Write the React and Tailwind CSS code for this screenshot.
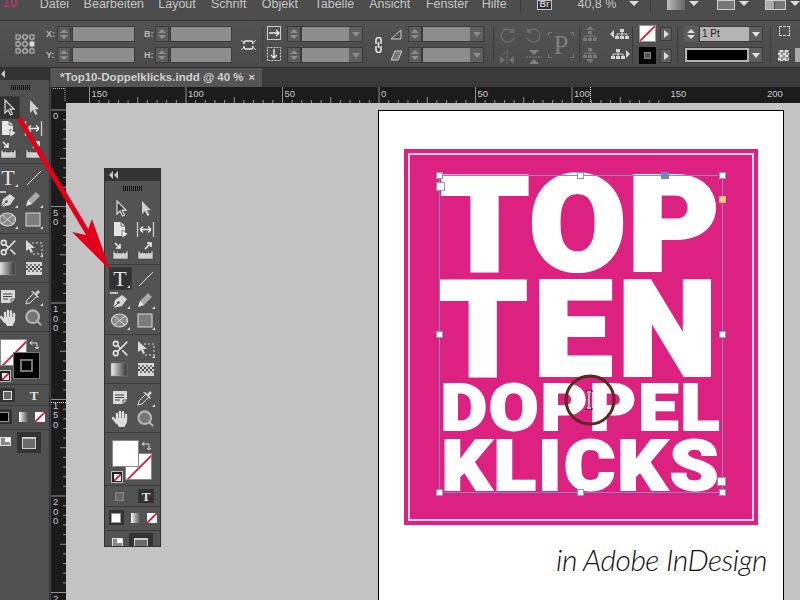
import React from 'react';
import { Scissors, Search } from 'lucide-react';

const MENU = [
  ['Datei', 'w-[44px]'],
  ['Bearbeiten', 'w-[75px]'],
  ['Layout', 'w-[53px]'],
  ['Schrift', 'w-[51px]'],
  ['Objekt', 'w-[53px]'],
  ['Tabelle', 'w-[55px]'],
  ['Ansicht', 'w-[57px]'],
  ['Fenster', 'w-[56px]'],
  ['Hilfe', 'w-[38px]'],
];

const Ico = ({ w = 21, h = 21, children, className = '' }) => (
  <svg width={w} height={h} viewBox={`0 0 ${w} ${h}`} className={`block shrink-0 ${className}`} fill="none">
    {children}
  </svg>
);

const Corner = () => <path d="M20 20h-3l3-3z" fill="#ddd" />;

const SelectIcon = () => (
  <Ico><path d="M7 3v13l3-3 2.5 5 2-1-2.4-4.8H16z" fill="#3c3c3c" stroke="#ddd" strokeWidth="1.2" /></Ico>
);
const DirectIcon = () => (
  <Ico><path d="M7 3v13l3-3 2.5 5 2-1-2.4-4.8H16z" fill="#cfcfcf" /></Ico>
);
const PageIcon = () => (
  <Ico>
    <path d="M4 3h7l4 4v10H4z" fill="#e4e4e4" />
    <path d="M11 3v4h4" stroke="#666" />
    <path d="M12 11v8l6-4z" fill="#eee" stroke="#444" strokeWidth=".6" />
  </Ico>
);
const GapIcon = () => (
  <Ico>
    <path d="M2.5 3v15M18.5 3v15" stroke="#ccc" strokeWidth="1.3" />
    <path d="M5 10.5h11M5 10.5l3-3M5 10.5l3 3M16 10.5l-3-3M16 10.5l-3 3" stroke="#eee" strokeWidth="1.3" />
  </Ico>
);
const Tray = () => (
  <path d="M3 11h2v2h2v-2h1v2h5v-2h1v2h2v-2h2v8H3z" fill="#d2d2d2" stroke="#333" strokeWidth=".5" />
);
const CollectIcon = () => (
  <Ico>
    <Tray />
    <path d="M5 3l5 5M10 4v4H6" stroke="#eee" strokeWidth="1.6" />
  </Ico>
);
const PlaceIcon = () => (
  <Ico>
    <Tray />
    <path d="M10 9l6-6M12 3h4v4" stroke="#eee" strokeWidth="1.6" />
  </Ico>
);
const TypeIcon = () => (
  <span className="relative flex h-[21px] w-[21px] items-center justify-center text-[22px] leading-none text-[#e4e4e4] [font-family:'Liberation_Serif',serif]">
    T
    <svg width="21" height="21" className="absolute left-0 top-0"><Corner /></svg>
  </span>
);
const LineIcon = () => (
  <Ico><path d="M4 18L18 4" stroke="#ddd" strokeWidth="1" /></Ico>
);
const PenIcon = () => (
  <Ico>
    <path d="M0 4h8" stroke="#ddd" strokeWidth="1.6" />
    <path d="M3 19l2-8 7-5 5 4-5 7z" fill="#d6d6d6" />
    <path d="M3 19l5-5" stroke="#444" />
    <circle cx="8.5" cy="13.5" r="1.2" fill="#444" />
    <Corner />
  </Ico>
);
const PencilIcon = () => (
  <Ico>
    <path d="M3 18l2-6 8-8 4 4-8 8z" fill="#a9a9a9" />
    <path d="M3 18l2-6 4 4z" fill="#e2e2e2" />
    <Corner />
  </Ico>
);
const EllipseIcon = () => (
  <Ico>
    <ellipse cx="9.5" cy="10.5" rx="8" ry="6.5" fill="#8a8a8a" stroke="#d8d8d8" strokeWidth="1.2" />
    <path d="M4 6l11 9M15 6L4 15" stroke="#d8d8d8" />
    <Corner />
  </Ico>
);
const RectIcon = () => (
  <Ico>
    <rect x="3" y="4" width="14" height="13" fill="#7c7c7c" stroke="#cfcfcf" strokeWidth="1.1" />
    <Corner />
  </Ico>
);
const FreeIcon = () => (
  <Ico>
    <path d="M9 6h10v11H9" stroke="#ddd" strokeDasharray="2 2" />
    <path d="M3 3v11l3-2 2 4 2-1-2-4h4z" fill="#d8d8d8" />
    <Corner />
  </Ico>
);
const GradientIcon = () => (
  <Ico>
    <defs>
      <linearGradient id="gr1"><stop stopColor="#eee" /><stop offset="1" stopColor="#333" /></linearGradient>
    </defs>
    <rect x="1" y="4" width="16" height="13" fill="url(#gr1)" stroke="#888" strokeWidth=".5" />
  </Ico>
);
const FeatherIcon = () => (
  <Ico>
    <rect x="3" y="4" width="16" height="13" fill="#d6d6d6" />
    {[0, 1, 2, 3, 4, 5, 6, 7].map((i) => (
      <rect key={i} x={3 + i * 2} y={i % 2 ? 8 : 10} width="2" height="2" fill="#444" />
    ))}
    {[0, 1, 2, 3, 4, 5, 6, 7].map((i) => (
      <rect key={i} x={3 + i * 2} y={i % 2 ? 12 : 6} width="2" height="2" fill="#777" />
    ))}
  </Ico>
);
const NoteIcon = () => (
  <Ico>
    <path d="M3 4h14v9l-4 4H3z" fill="#d8d8d8" />
    <path d="M5 8h9M5 10.5h9M5 13h5" stroke="#444" />
    <path d="M13 17v-4h4" stroke="#555" />
  </Ico>
);
const DropperIcon = () => (
  <Ico>
    <path d="M3 18l1-4 7-7 3 3-7 7z" fill="#555" stroke="#ddd" />
    <path d="M10 5l2 2 3-3 2 2-3 3 2 2-1 1-7-7z" fill="#ccc" />
    <Corner />
  </Ico>
);
const HandIcon = () => (
  <Ico>
    <g stroke="#dcdcdc" strokeWidth="2.4" strokeLinecap="round">
      <path d="M7 6v6M10 4v7M13 4.500v7M16 7v6M3 10l3.500 4.500" />
    </g>
    <path d="M6 10h11v4l-2.500 5H9l-3-5z" fill="#dcdcdc" />
  </Ico>
);
const ZoomIcon = () => (
  <span className="flex h-[21px] w-[21px] items-center justify-center">
    <Search size={19} fill="#777" stroke="#b5b5b5" strokeWidth={2.6} />
  </span>
);
const ScissorIcon = () => (
  <span className="flex h-[21px] w-[21px] items-center justify-center">
    <Scissors size={19} stroke="#e2e2e2" strokeWidth={2} />
  </span>
);

const Slash = ({ s }) => <path d={`M0 ${s}L${s} 0`} stroke="#d7182a" strokeWidth="1.7" />;

const ToolRow = ({ left, right, activeLeft }) => (
  <div className="flex h-[21px] justify-center gap-1">
    <div className={`h-[21px] w-[21px] ${activeLeft ? 'bg-[#323232] outline-1 outline-[#3c3c3c]' : ''}`}>{left}</div>
    <div className="h-[21px] w-[21px]">{right}</div>
  </div>
);

const Sep = ({ className = 'my-[3px]' }) => <div className={`h-px shrink-0 bg-[#3c3c3c] ${className}`} />;

const HeadArrow = () => <div className="h-0 w-0 border-y-[4px] border-r-[4px] border-y-transparent border-r-[#c8c8c8]" />;

// same toolbox twice: docked on the left edge and floating on the pasteboard
const ToolPanel = ({ floating }) => (
  <div className={`flex w-[57px] shrink-0 flex-col ${floating ? 'h-[379px] overflow-hidden border-x border-b border-[#333] bg-[#535353]' : 'h-full bg-[#505050]'}`}>
    <div className={`flex shrink-0 items-center gap-px bg-[#343434] ${floating ? 'h-[13px] pl-[4px]' : 'h-[12px] pl-[9px]'}`}>
      <HeadArrow />
      {floating && <HeadArrow />}
    </div>
    <div className="mx-auto mb-[7px] mt-[5px] h-[5px] w-[20px] shrink-0 bg-[repeating-linear-gradient(90deg,#111_0,#111_1px,transparent_1px,transparent_2px)]" />
    <ToolRow left={<SelectIcon />} right={<DirectIcon />} activeLeft={!floating} />
    <ToolRow left={<PageIcon />} right={<GapIcon />} />
    <ToolRow left={<CollectIcon />} right={<PlaceIcon />} />
    <Sep />
    <ToolRow left={<TypeIcon />} right={<LineIcon />} activeLeft={floating} />
    <ToolRow left={<PenIcon />} right={<PencilIcon />} />
    <ToolRow left={<EllipseIcon />} right={<RectIcon />} />
    <Sep />
    <ToolRow left={<ScissorIcon />} right={<FreeIcon />} />
    <ToolRow left={<GradientIcon />} right={<FeatherIcon />} />
    <Sep />
    <ToolRow left={<NoteIcon />} right={<DropperIcon />} />
    <ToolRow left={<HandIcon />} right={<ZoomIcon />} />
    <Sep />
    <ColorBlock floating={floating} />
    <Sep />
    <div className="flex h-[14px] shrink-0 items-center justify-center gap-[11px]">
      <div className={`flex h-[14px] w-[16px] items-center justify-center ${floating ? '' : 'bg-[#333]'}`}>
        <div className={`h-[9px] w-[9px] border ${floating ? 'border-[#888] bg-[#666]' : 'border-[#ddd] bg-[#666]'}`} />
      </div>
      <div className={`flex h-[14px] w-[16px] items-center justify-center text-[13px] font-bold leading-none text-[#e4e4e4] [font-family:'Liberation_Serif',serif] ${floating ? 'bg-[#333]' : ''}`}>T</div>
    </div>
    <Sep />
    <div className="flex h-[15px] shrink-0 items-center justify-center gap-[7px]">
      <div className="flex h-[15px] w-[15px] items-center justify-center bg-[#333]">
        <div className={`h-[10px] w-[10px] border border-[#999] ${floating ? 'bg-white' : 'bg-black'}`} />
      </div>
      <div className="h-[10px] w-[9px] bg-linear-to-r from-white to-[#555]" />
      <Ico w={10} h={10}><rect width="10" height="10" fill="#fff" /><Slash s={10} /></Ico>
    </div>
    <Sep className="mb-[2px] mt-[5px]" />
    <div className="flex shrink-0 items-start justify-center gap-[6px]">
      <div className="mt-[5px] flex h-[9px] w-[11px] items-start justify-end border border-[#ddd] bg-[#888]">
        <div className="h-[4px] w-[5px] bg-white" />
      </div>
      <div className="flex h-[21px] w-[24px] items-center justify-center bg-[#333]">
        <div className="h-[12px] w-[14px] border border-t-2 border-[#ccc] bg-[#6a6a6a]" />
      </div>
    </div>
  </div>
);

const ColorBlock = ({ floating }) => {
  const fillBox = floating ? (
    <div className="h-[27px] w-[27px] border border-[#888] bg-white" />
  ) : (
    <svg width="27" height="27" className="block border border-[#888] bg-white"><Slash s={27} /></svg>
  );
  const strokeBox = floating ? (
    <svg width="27" height="27" className="block border border-[#888] bg-white"><Slash s={27} /></svg>
  ) : (
    <div className="flex h-[27px] w-[27px] items-center justify-center border border-[#777] bg-black">
      <div className="h-[13px] w-[13px] border-2 border-[#777]" />
    </div>
  );
  return (
    <div className={`flex h-[46px] shrink-0 flex-col pt-[4px] ${floating ? 'pl-[7px]' : 'pl-[8px]'}`}>
      <div className="flex">
        <div className={floating ? 'relative z-10' : ''}>{fillBox}</div>
        <Ico w={14} h={14} className="ml-[1px]">
          <path d="M2 4h7v6M2 4l2.500-2M2 4l2.500 2M9 10l-2-2M9 10l2-2" stroke="#ddd" strokeWidth="1" />
        </Ico>
      </div>
      <div className="flex items-end">
        <div className="relative z-20 -mb-[3px] -ml-px flex h-[12px] w-[12px] shrink-0 items-center justify-center border border-[#bbb] bg-[#222]">
          <Ico w={7} h={7}><rect width="7" height="7" fill="#eee" /><Slash s={7} /></Ico>
        </div>
        <div className={`ml-[2px] -mt-[14px] ${floating ? '' : 'relative z-10'}`}>{strokeBox}</div>
      </div>
    </div>
  );
};

const Spinner = () => (
  <div className="flex h-full w-[14px] shrink-0 flex-col items-center justify-center gap-[2px] border border-[#3b3b3b] bg-[#5c5c5c]">
    <div className="h-0 w-0 border-x-[4px] border-b-[4px] border-x-transparent border-b-[#8d8d8d]" />
    <div className="h-0 w-0 border-x-[4px] border-t-[4px] border-x-transparent border-t-[#8d8d8d]" />
  </div>
);

const NumField = ({ label, wide }) => (
  <div className="flex h-[16px] items-center">
    <span className="w-[11px] text-[9px] font-bold leading-none text-[#b8b8b8]">{label}</span>
    <Spinner />
    <div className={`ml-px h-full border border-[#3b3b3b] bg-[#8d8d8d] ${wide ? 'w-[63px]' : 'w-[62px]'}`} />
  </div>
);

const DropField = () => (
  <div className="flex h-[16px]">
    <Spinner />
    <div className="flex h-full w-[62px] border border-[#3b3b3b] bg-[#8d8d8d]">
      <div className="flex-1" />
      <div className="flex w-[13px] items-center justify-center bg-[#5f5f5f]">
        <div className="h-0 w-0 border-x-[4px] border-t-[5px] border-x-transparent border-t-[#8d8d8d]" />
      </div>
    </div>
  </div>
);

const VSep = ({ className }) => <div className={`h-[37px] w-px shrink-0 self-center bg-[#3a3a3a] ${className}`} />;

const Stack = ({ className = '', children }) => (
  <div className={`flex shrink-0 flex-col gap-[5px] ${className}`}>{children}</div>
);

const Proxy = () => (
  <Ico w={20} h={20}>
    <path d="M3 3H17V17H3ZM3 10H17M10 3V17" stroke="#b8b8b8" strokeWidth=".8" />
    {[1, 8, 15].map((x) => [1, 8, 15].map((y) => (
      <rect key={`${x}-${y}`} x={x} y={y} width="4" height="4" fill={x === 15 && y === 8 ? '#ddd' : '#505050'} stroke="#ddd" strokeWidth=".8" />
    )))}
  </Ico>
);

const BrokenChain = () => (
  <Ico w={15} h={16}>
    <path d="M5 4h5a2 2 0 0 1 2 2v1M5 12h5a2 2 0 0 0 2-2V9M5 4a2 2 0 0 0-2 2v1M5 12a2 2 0 0 1-2-2V9" stroke="#e4e4e4" strokeWidth="1.6" />
    <path d="M0 3l2 2M15 3l-2 2M0 13l2-2M15 13l-2-2" stroke="#ccc" />
  </Ico>
);
const Chain = () => (
  <Ico w={9} h={16}>
    <path d="M2 7V3a2.400 2.400 0 0 1 5 0v4M2 9v4a2.400 2.400 0 0 0 5 0V9M4.500 5v6" stroke="#e4e4e4" strokeWidth="1.6" />
  </Ico>
);
const ScaleBox = ({ down }) => (
  <Ico w={15} h={15}>
    <rect x=".5" y=".5" width="13" height="13" stroke="#ccc" strokeDasharray={down ? '2 1' : undefined} />
    {down ? (
      <path d="M7 2v9M4 8l3 3 3-3" stroke="#eee" strokeWidth="1.4" />
    ) : (
      <path d="M2 7h10M9 4l3 3-3 3" stroke="#eee" strokeWidth="1.4" />
    )}
  </Ico>
);
const Rotate = ({ flip }) => (
  <Ico w={16} h={16} className={flip ? '-scale-x-100' : ''}>
    <path d="M14 5a6.500 6.500 0 1 0 1 5" stroke="#707070" strokeWidth="1.2" />
    <path d="M15 1v5h-5z" fill="#707070" />
  </Ico>
);
const FlipA = () => (
  <Ico w={16} h={16}>
    <path d="M1 7v8l5-4zM15 7v8l-5-4z" fill="#707070" />
    <path d="M3 6a6 6 0 0 1 10 0M8 1v15" stroke="#707070" strokeDasharray="2 1" />
  </Ico>
);
const FlipB = () => (
  <Ico w={16} h={16}>
    <path d="M3 1h10L8 6zM3 15h10L8 10z" fill="#828282" />
    <path d="M0 8h16" stroke="#828282" strokeDasharray="2 1" />
  </Ico>
);
const Tree = ({ c = '#7a7a7a' }) => (
  <>
    <rect x="5" y="0" width="4" height="3" fill={c} />
    <path d="M7 3v2M2 7V5h10v2M7 5v2" stroke={c} />
    <rect x="0" y="7" width="4" height="3" fill={c} />
    <rect x="5" y="7" width="4" height="3" fill={c} />
    <rect x="10" y="7" width="4" height="3" fill={c} />
  </>
);
const AlignIcon = ({ dir }) => {
  const c = dir === 'l' || dir === 'r' ? '#d4d4d4' : '#7a7a7a';
  return (
    <Ico w={20} h={17}>
      {dir === 't' && <path d="M7 0l4 4H3z" fill={c} />}
      {dir === 'b' && <path d="M3 13h8l-4 4z" fill={c} />}
      {dir === 'l' && <path d="M4 4v8L0 8z" fill={c} />}
      {dir === 'r' && <path d="M16 4v8l4-4z" fill={c} />}
      <g transform={dir === 'l' ? 'translate(5 3)' : dir === 'r' ? 'translate(1 3)' : dir === 't' ? 'translate(0 5)' : 'translate(0 2)'}>
        <Tree c={c} />
      </g>
    </Ico>
  );
};

const ArrowBtn = () => (
  <div className="flex h-[14px] w-[12px] items-center justify-center border border-[#3c3c3c] bg-[#5e5e5e]">
    <div className="h-0 w-0 border-y-[4px] border-l-[5px] border-y-transparent border-l-[#ddd]" />
  </div>
);

const DropBtn = () => (
  <div className="flex h-full w-[13px] shrink-0 items-center justify-center bg-[#5e5e5e]">
    <div className="h-0 w-0 border-x-[4px] border-t-[5px] border-x-transparent border-t-[#e2e2e2]" />
  </div>
);

const ControlBar = () => (
  <div className="flex h-[47px] shrink-0 items-start overflow-hidden border-b border-[#2d2d2d] bg-linear-to-b from-[#535353] to-[#4b4b4b] pt-[5px]">
    <div className="ml-[15px] mt-[8px] shrink-0"><Proxy /></div>
    <Stack className="ml-[11px]">
      <NumField label="X:" wide />
      <NumField label="Y:" wide />
    </Stack>
    <Stack className="ml-[9px]">
      <NumField label="B:" />
      <NumField label="H:" />
    </Stack>
    <div className="ml-[9px] mt-[11px] shrink-0"><BrokenChain /></div>
    <VSep className="ml-[6px] -mt-[5px]" />
    <Stack className="ml-[4px]">
      <div className="flex h-[16px] gap-[5px]"><ScaleBox /><DropField /></div>
      <div className="flex h-[16px] gap-[5px]"><ScaleBox down /><DropField /></div>
    </Stack>
    <div className="ml-[11px] mt-[11px] shrink-0"><Chain /></div>
    <Stack className="ml-[8px]">
      <div className="flex h-[16px] items-center gap-[6px]">
        <Ico w={11} h={11}><path d="M0 10L10 1v9z" stroke="#ccc" /></Ico>
        <DropField />
      </div>
      <div className="flex h-[16px] items-center gap-[6px]">
        <Ico w={11} h={11}><path d="M0 10L4 1h7L7 10z" stroke="#ccc" fill="#777" /></Ico>
        <DropField />
      </div>
    </Stack>
    <VSep className="ml-[9px] -mt-[5px]" />
    <div className="ml-[5px] grid shrink-0 grid-cols-[16px_16px] gap-x-[11px] gap-y-[6px] pt-px">
      <Rotate /><Rotate flip /><FlipA /><FlipB />
    </div>
    <div className="relative ml-[6px] mt-[6px] flex h-[26px] w-[26px] shrink-0 items-center justify-center text-[27px] leading-none text-[#7e7e7e] [font-family:'Liberation_Serif',serif]">
      P
      <svg width="26" height="26" className="absolute left-0 top-0" fill="none">
        <path d="M.5 4V.5H4M22 .5h3.500V4M.5 22v3.500H4M22 25.500h3.500V22" stroke="#777" />
      </svg>
    </div>
    <VSep className="ml-[5px] -mt-[5px]" />
    <div className="ml-[3px] grid shrink-0 grid-cols-[20px_20px] gap-x-[7px] gap-y-[3px]">
      <AlignIcon dir="t" /><AlignIcon dir="l" /><AlignIcon dir="b" /><AlignIcon dir="r" />
    </div>
    <VSep className="ml-[2px] -mt-[5px]" />
    <Stack className="ml-[6px] -mt-[1px] gap-[4px]">
      <div className="flex items-center gap-[4px]">
        <svg width="17" height="17" className="block border border-[#999] bg-white"><Slash s={15} /></svg>
        <ArrowBtn />
      </div>
      <div className="flex items-center gap-[4px]">
        <div className="flex h-[17px] w-[17px] items-center justify-center bg-black">
          <div className="h-[7px] w-[7px] border border-[#888] bg-[#555]" />
        </div>
        <ArrowBtn />
      </div>
    </Stack>
    <VSep className="ml-[5px] -mt-[5px]" />
    <Stack className="ml-[6px]">
      <div className="flex h-[16px]">
        <div className="flex h-full w-[14px] shrink-0 flex-col items-center justify-center gap-[2px] bg-[#5c5c5c]">
          <div className="h-0 w-0 border-x-[4px] border-b-[4px] border-x-transparent border-b-[#ddd]" />
          <div className="h-0 w-0 border-x-[4px] border-t-[4px] border-x-transparent border-t-[#ddd]" />
        </div>
        <div className="ml-px flex h-full w-[64px] border border-[#3b3b3b] bg-[#b4b4b4]">
          <span className="flex-1 pl-[2px] text-[10px] font-medium leading-[14px] text-[#222]">1 Pt</span>
          <DropBtn />
        </div>
      </div>
      <div className="flex h-[16px] w-[79px] border border-[#3b3b3b] bg-[#b4b4b4] pl-[2px]">
        <div className="my-[2px] mr-[2px] flex-1 bg-black" />
        <DropBtn />
      </div>
    </Stack>
    <VSep className="ml-[7px] -mt-[5px]" />
    <div className="ml-[7px] flex shrink-0 flex-col gap-[12px]">
      <div className="ml-[1px] h-[10px] w-[11px] border border-dashed border-[#ccc]" />
      <div className="flex items-center gap-[6px]">
        <div className="h-[11px] w-[11px] bg-[conic-gradient(#ddd_25%,#888_0_50%,#ddd_0_75%,#888_0)] bg-[length:5px_5px]" />
        <div className="h-[14px] w-[10px] bg-[#aaa]" />
      </div>
    </div>
  </div>
);

const TICKS = Array.from({ length: 60 }, (_, i) => i);
const STEP = 96.5;

const TopRuler = () => (
  <svg width="749" height="16" className="block shrink-0 bg-[#1c1c1c]">
    <path d="M2 1.500h12M14 1v13" stroke="#bbb" strokeDasharray="1 1" />
    {TICKS.map((i) => {
      const x = 328 - 3 * STEP + (i * STEP) / 10;
      if (x < 16) return null;
      const len = i % 10 === 0 ? 16 : i % 5 === 0 ? 6 : 3;
      return <line key={i} x1={x} x2={x} y1={16 - len} y2={16} stroke="#b0b0b0" strokeWidth=".8" />;
    })}
    {[150, 100, 50, 0, 50, 100, 150, 200].map((n, i) => (
      <text key={i} x={328 - 3 * STEP + i * STEP + 2} y="10" fontSize="9.500" fill="#c8c8c8" fontFamily="Liberation Sans">{n}</text>
    ))}
    <path d="M539.500 0v16" stroke="#fff" strokeDasharray="1 1" />
  </svg>
);

const LeftRuler = () => (
  <svg width="15" height="497" className="block shrink-0 bg-[#1c1c1c]">
    {TICKS.map((i) => {
      const y = 7 + (i * STEP) / 10;
      const len = i % 10 === 0 ? 15 : i % 5 === 0 ? 6 : 3;
      return <line key={i} x1={15 - len} x2={15} y1={y} y2={y} stroke="#b0b0b0" strokeWidth=".8" />;
    })}
    {['0', '50', '100', '150', '200', '250'].map((n, i) =>
      n.split('').map((d, j) => (
        <text key={`${i}-${j}`} x="2" y={7 + i * STEP + 9 + j * 9.5} fontSize="9.500" fill="#c8c8c8" fontFamily="Liberation Sans">{d}</text>
      ))
    )}
    <path d="M0 299.500h15" stroke="#fff" strokeDasharray="1 1" />
  </svg>
);

const Handle = ({ className }) => (
  <div className={`absolute h-[7px] w-[7px] border border-[#8f94d0] bg-white ${className}`} />
);

const SelectionFrame = () => (
  <div className="absolute left-[35px] top-[26px] h-[318px] w-[284px] border border-[#8f84cc]">
    <Handle className="-left-[4px] -top-[4px]" />
    <Handle className="left-[137px] -top-[4px]" />
    <div className="absolute left-[221px] -top-[4px] h-[7px] w-[8px] bg-[#6f86c4]" />
    <Handle className="-right-[4px] -top-[4px]" />
    <div className="absolute -left-[4px] top-[6px] h-[9px] w-[9px] border border-[#8f94d0] bg-white" />
    <div className="absolute -right-[4px] top-[20px] h-[7px] w-[7px] border border-[#b9b08c] bg-[#f3d27a]" />
    <Handle className="-left-[4px] top-[155px]" />
    <Handle className="-right-[4px] top-[155px]" />
    <div className="absolute -right-[4px] bottom-[6px] h-[9px] w-[9px] border border-[#8f94d0] bg-white" />
    <Handle className="-left-[4px] -bottom-[4px]" />
    <Handle className="left-[137px] -bottom-[4px]" />
    <Handle className="-right-[4px] -bottom-[4px]" />
  </div>
);

const Cursor = () => (
  <svg width="56" height="56" className="absolute left-[158px] top-[223px]">
    <circle cx="28" cy="28" r="24" stroke="#5c2a1c" strokeWidth="3" fill="none" />
    <path d="M24 19h7M24 37h7M27.500 19v18" stroke="#111" strokeWidth="1.2" />
    <path d="M25 20h4M25 36h4M27 20v16" stroke="#8fc4c4" strokeWidth="2" />
  </svg>
);

const BigLine = ({ className, children }) => (
  <div className={`whitespace-nowrap text-center font-black text-white [font-family:Roboto,sans-serif] ${className}`}>{children}</div>
);

const Poster = () => (
  <div className="relative h-[376px] w-[354px] bg-[#dc2180] p-[4px]">
    <div className="h-full border-2 border-[#f7d3e4] pt-[20px]">
      <BigLine className="h-[100px] scale-x-[1.06] text-[132px] leading-[100px] tracking-[2px] [-webkit-text-stroke:4px_white]">TOP</BigLine>
      <BigLine className="mt-[5px] h-[100px] scale-x-[1.06] text-[132px] leading-[100px] tracking-[6px] [-webkit-text-stroke:4px_white]">TEN</BigLine>
      <BigLine className="mt-[3px] h-[50px] scale-x-[1.1] text-[65px] leading-[50px] tracking-[2px] [-webkit-text-stroke:2px_white]">DOPPEL</BigLine>
      <BigLine className="mt-[6px] h-[54px] scale-x-[1.1] text-[71px] leading-[54px] tracking-[2px] [-webkit-text-stroke:2px_white]">KLICKS</BigLine>
    </div>
    <SelectionFrame />
    <Cursor />
  </div>
);

const Page = () => (
  <div className="h-[520px] w-[406px] shrink-0 border-x border-t border-black bg-white pl-[25px] pt-[38px]">
    <Poster />
    <p className="mr-[16px] mt-[16px] whitespace-nowrap text-right text-[30px] font-light italic leading-[36px] tracking-[-0.5px] text-[#111] [font-family:Lato,sans-serif]">in Adobe InDesign</p>
  </div>
);

export default function App() {
  return (
    <div className="relative flex h-[600px] w-[800px] flex-col overflow-hidden bg-[#4b4b4b] text-[#c6c6c6] [font-family:'Liberation_Sans',sans-serif]">
      <div className="flex h-[21px] shrink-0 border-b border-[#333] bg-[#4d4d4d]">
        <div className="h-[9px] w-[40px] pl-[2px] text-[14px] font-bold leading-[5px] text-[#a83a66]">10</div>
        {MENU.map(([name, w]) => (
          <div key={name} className={`h-[9px] text-[12.5px] leading-[9px] ${w}`}>{name}</div>
        ))}
        <div className="h-[13px] w-px bg-[#3a3a3a]" />
        <div className="ml-[16px] h-[10px] w-[16px] border border-[#c4c4c4] bg-[#333] text-center text-[9px] font-bold leading-[7px]">Br</div>
        <div className="ml-[25px] h-[9px] w-[44px] text-[12.5px] leading-[9px]">40,8 %</div>
        <div className="ml-[8px] mt-[1px] h-0 w-0 border-x-[5px] border-t-[5px] border-x-transparent border-t-[#ddd]" />
        <div className="ml-[11px] h-[13px] w-px bg-[#3a3a3a]" />
        <div className="ml-[16px] h-[10px] w-[18px] bg-linear-to-r from-[#bbb] to-[#666]" />
        <div className="ml-[4px] mt-[1px] h-0 w-0 border-x-[5px] border-t-[5px] border-x-transparent border-t-[#ddd]" />
        <div className="ml-[18px] h-[10px] w-[18px] border border-[#ccc] bg-[#777]" />
        <div className="ml-[4px] mt-[1px] h-0 w-0 border-x-[5px] border-t-[5px] border-x-transparent border-t-[#ddd]" />
        <div className="ml-[16px] grid h-[10px] w-[21px] grid-cols-[8px_1fr] gap-px border border-[#ccc]">
          <div className="bg-[#aaa]" /><div className="bg-[#777]" />
        </div>
        <div className="ml-[4px] mt-[1px] h-0 w-0 border-x-[5px] border-t-[5px] border-x-transparent border-t-[#ddd]" />
      </div>
      <ControlBar />
      <div className="flex min-h-0 flex-1">
        <div className="flex h-full w-[50px] shrink-0 justify-end overflow-hidden border-r border-[#2d2d2d]">
          <ToolPanel />
        </div>
        <div className="ml-px flex min-w-0 flex-1 flex-col">
          <div className="flex h-[19px] shrink-0 bg-[#3a3a3a]">
            <div className="flex h-full w-[211px] items-center justify-between bg-[#555] pl-[9px] pr-[7px] text-[11.5px] font-bold text-[#d0d0d0]">
              <span className="whitespace-nowrap">*Top10-Doppelklicks.indd @ 40 %</span>
              <span className="text-[11px] leading-none">×</span>
            </div>
          </div>
          <TopRuler />
          <div className="flex min-h-0 flex-1">
            <LeftRuler />
            <div className="min-w-0 flex-1 overflow-hidden bg-[#c3c3c3] pl-[312px] pt-[7px]">
              <Page />
            </div>
          </div>
        </div>
      </div>
      <div className="absolute left-[104px] top-[168px]">
        <ToolPanel floating />
      </div>
      <svg width="800" height="600" className="pointer-events-none absolute left-0 top-0">
        <path d="M19 118L92 240" stroke="#e2001a" strokeWidth="5" />
        <path d="M110 270L72 232L86 235L92 219z" fill="#e2001a" />
      </svg>
    </div>
  );
}
